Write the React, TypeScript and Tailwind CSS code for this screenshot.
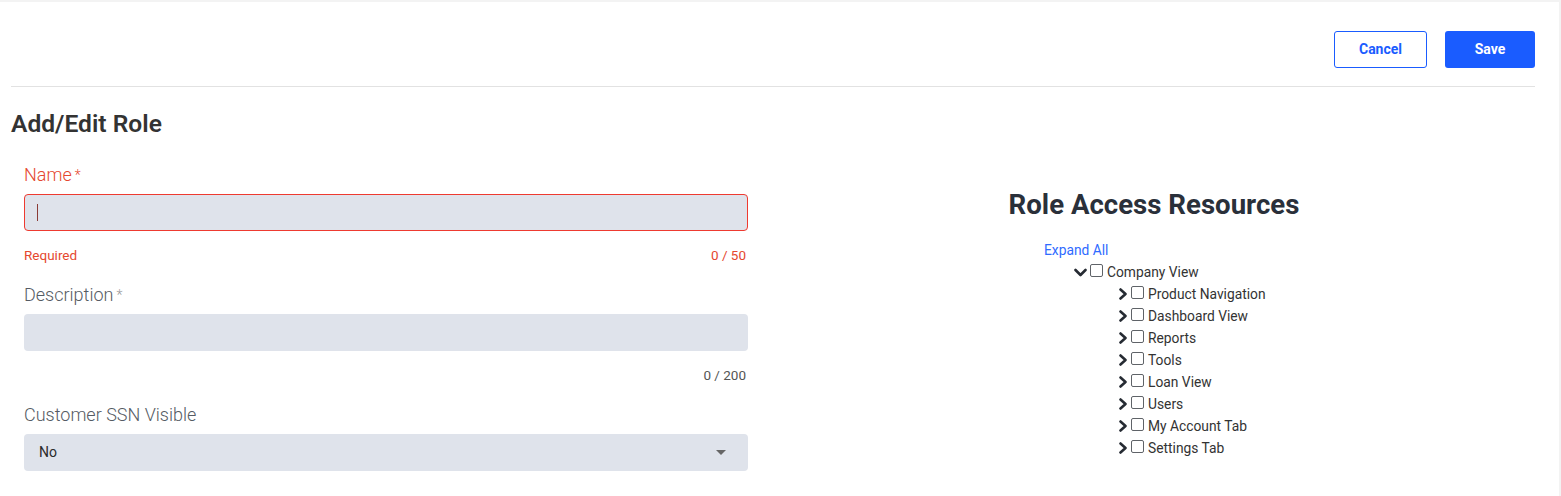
import React from 'react';

const font = { fontFamily: 'Roboto, "Liberation Sans", sans-serif' };

const children = [
  'Product Navigation',
  'Dashboard View',
  'Reports',
  'Tools',
  'Loan View',
  'Users',
  'My Account Tab',
  'Settings Tab',
];

const Box = () => (
  <span className="inline-block w-[13px] h-[13px] border border-[#5f6368] rounded-[2px] bg-white shrink-0 translate-y-[-2px]" />
);

const ChevronDown = () => (
  <svg className="w-[13px] h-[9px] shrink-0" viewBox="0 0 13 9" fill="none">
    <path d="M1.5 2 L6.5 7 L11.5 2" stroke="#262b33" strokeWidth={2.6} strokeLinecap="round" strokeLinejoin="round" />
  </svg>
);

const ChevronRight = () => (
  <svg className="w-[10px] h-[12px] shrink-0" viewBox="0 0 10 12" fill="none">
    <path d="M2.5 1.5 L7.5 6 L2.5 10.5" stroke="#262b33" strokeWidth={2.6} strokeLinecap="round" strokeLinejoin="round" />
  </svg>
);

const Field: React.FC<{
  label: string;
  required?: boolean;
  error?: boolean;
  helperLeft?: string;
  helperRight?: string;
  children: React.ReactNode;
}> = ({ label, required, error, helperLeft, helperRight, children }) => (
  <div className="flex flex-col">
    <label className={`h-[24px] leading-[24px] text-[18px] font-light ${error ? 'text-[#e5482e]' : 'text-[#555b63]'}`}>
      {label}
      {required && <span className={`ml-[3px] text-[14px] align-top ${error ? '' : 'text-[#9a9a9a]'}`}>*</span>}
    </label>
    <div className="mt-[7px]">{children}</div>
    <div className="mt-[16px] h-[16px] pr-[2px] flex justify-between text-[13.5px] leading-[16px]">
      <span className={error ? 'text-[#e5482e]' : 'text-[#555]'}>{helperLeft}</span>
      <span className={error ? 'text-[#e5482e]' : 'text-[#555]'}>{helperRight}</span>
    </div>
  </div>
);

export default function App() {
  return (
    <div className="w-[1561px] h-[496px] bg-[#f3f3f3] pt-[2px] pr-[2px] overflow-hidden" style={font}>
      <div className="h-[494px] bg-white pl-[11px] pr-[24px]">
        {/* Header actions */}
        <div className="flex justify-end gap-[18px] pt-[29px] pb-[18px] border-b border-[#e2e2e2]">
          <button className="w-[93px] h-[37px] border border-[#1a5cff] rounded-[3px] text-[#1a5cff] text-[14px] font-bold bg-white">
            Cancel
          </button>
          <button className="w-[90px] h-[37px] rounded-[3px] bg-[#1a5cff] text-white text-[14px] font-bold">
            Save
          </button>
        </div>

        <div className="grid grid-cols-2">
          {/* Left: form */}
          <div>
            <h1 className="mt-[23px] text-[24.6px] leading-[28px] font-semibold text-[#333]">Add/Edit Role</h1>
            <div className="mt-[25px] pl-[13px] pr-[25px] flex flex-col gap-[20px]">
              <Field label="Name" required error helperLeft="Required" helperRight="0 / 50">
                <div className="h-[37px] bg-[#dfe3eb] border border-[#ee3a30] rounded-[4px] flex items-center pl-[12px]">
                  <span className="w-px h-[17px] bg-[#8a3b36]" />
                </div>
              </Field>
              <Field label="Description" required helperRight="0 / 200">
                <div className="h-[37px] bg-[#dfe3eb] rounded-[4px]" />
              </Field>
              <div className="flex flex-col">
                <label className="h-[24px] leading-[24px] text-[18px] font-light text-[#555b63]">Customer SSN Visible</label>
                <div className="mt-[7px] h-[37px] bg-[#dfe3eb] rounded-[4px] flex items-center justify-between pl-[15px] pr-[22px]">
                  <span className="text-[14px] text-[#2b2b2b]">No</span>
                  <span className="w-0 h-0 border-l-[5px] border-r-[5px] border-t-[5px] border-l-transparent border-r-transparent border-t-[#666]" />
                </div>
              </div>
            </div>
          </div>

          {/* Right: resources */}
          <div>
            <h2 className="mt-[102px] text-center text-[27.6px] leading-[32px] font-bold text-[#2a303a]">Role Access Resources</h2>
            <div className="mt-[18px] ml-[271px] text-[13.8px] leading-[22px]">
              <div className="text-[#2f6bff]">Expand All</div>
              <div className="flex items-center h-[22px] pl-[30px] text-[#333]">
                <ChevronDown />
                <span className="ml-[3px] flex items-center"><Box /></span>
                <span className="ml-[4px]">Company View</span>
              </div>
              {children.map(c => (
                <div key={c} className="flex items-center h-[22px] pl-[74px] text-[#333]">
                  <ChevronRight />
                  <span className="ml-[3px] flex items-center"><Box /></span>
                  <span className="ml-[4px]">{c}</span>
                </div>
              ))}
            </div>
          </div>
        </div>
      </div>
    </div>
  );
}
